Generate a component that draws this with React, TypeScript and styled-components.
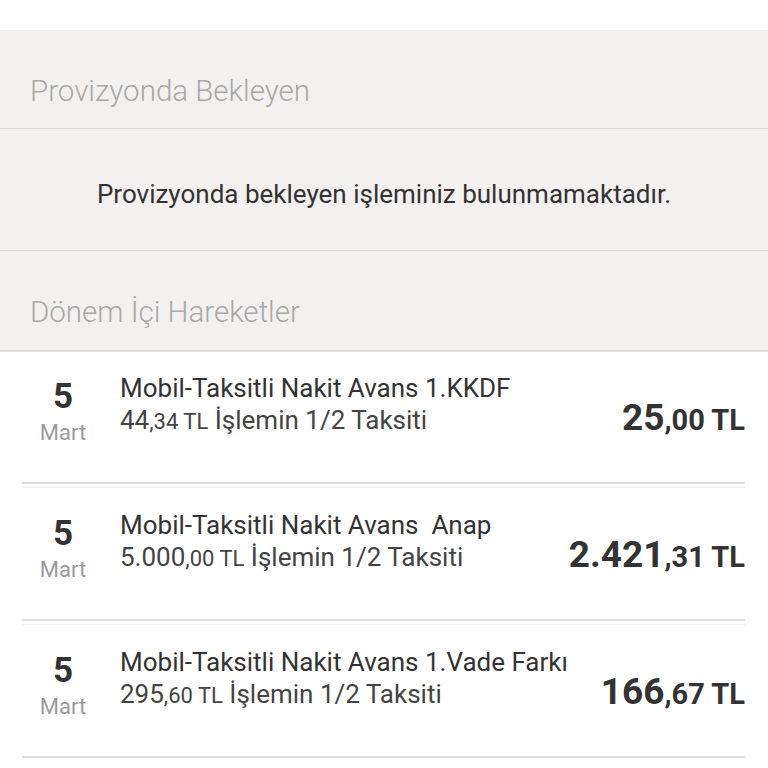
import styled, { createGlobalStyle } from 'styled-components';

const GlobalStyle = createGlobalStyle`
  html, body {
    margin: 0;
    padding: 0;
    background: #ffffff;
    font-family: Roboto, "Liberation Sans", sans-serif;
  }
`;

const Page = styled.div`
  width: 768px;
  padding-top: 30px;
  background: #ffffff;
`;

const GraySection = styled.div`
  background: #f2f1f0;
`;

const SectionHeader = styled.div<{ $h: number }>`
  height: ${(p) => p.$h}px;
  box-sizing: border-box;
  padding: 43px 30px 0;
  font-size: 29.5px;
  font-weight: 300;
  line-height: 36px;
  color: #a9a9a9;
  border-bottom: 1px solid #dcdbda;
`;

const EmptyMessage = styled.div`
  height: 122px;
  box-sizing: border-box;
  padding-top: 8px;
  display: flex;
  align-items: center;
  justify-content: center;
  font-size: 26px;
  color: #333333;
  border-bottom: 1px solid #dcdbda;
`;

const List = styled.div`
  background: #ffffff;
  border-top: 1px solid #e2e2e2;
`;

const Row = styled.div`
  margin: 0 23px 0 22px;
  height: 132px;
  box-sizing: border-box;
  padding-top: 20px;
  display: flex;
  align-items: flex-start;
  border-bottom: 2px solid #dddddd;
  & + & {
    border-top: 1px solid #efefef;
    margin-top: 3px;
    height: 134px;
    padding-top: 21px;
  }
`;

const DateCol = styled.div`
  width: 82px;
  margin-top: 4px;
  display: flex;
  flex-direction: column;
  align-items: center;
  flex-shrink: 0;
`;

const Day = styled.div`
  font-size: 35px;
  font-weight: 700;
  color: #333333;
  line-height: 42px;
`;

const Month = styled.div`
  font-size: 22px;
  color: #9b9b9b;
  line-height: 30px;
`;

const Info = styled.div`
  flex: 1;
  padding-left: 16px;
  color: #333333;
  font-size: 26px;
  line-height: 32px;
`;

const Sub = styled.div`
  color: #444444;
`;

const SmallTL = styled.span`
  font-size: 22px;
`;

const Amount = styled.div`
  align-self: center;
  margin-top: -20px;
  font-weight: 700;
  color: #333333;
  white-space: nowrap;
`;

const AmountMain = styled.span`
  font-size: 37px;
`;

const AmountRest = styled.span`
  font-size: 29px;
`;

type Tx = {
  title: string;
  base: string;
  baseCents: string;
  main: string;
  rest: string;
};

const txs: Tx[] = [
  { title: 'Mobil-Taksitli Nakit Avans 1.KKDF', base: '44', baseCents: ',34', main: '25', rest: ',00 TL' },
  { title: 'Mobil-Taksitli Nakit Avans\u00a0 Anap', base: '5.000', baseCents: ',00', main: '2.421', rest: ',31 TL' },
  { title: 'Mobil-Taksitli Nakit Avans 1.Vade Farkı', base: '295', baseCents: ',60', main: '166', rest: ',67 TL' },
];

export default function App() {
  return (
    <Page>
      <GlobalStyle />
      <GraySection>
        <SectionHeader $h={99}>Provizyonda Bekleyen</SectionHeader>
        <EmptyMessage>Provizyonda bekleyen işleminiz bulunmamaktadır.</EmptyMessage>
        <SectionHeader $h={100}>Dönem İçi Hareketler</SectionHeader>
      </GraySection>
      <List>
        {txs.map((t, i) => (
          <Row key={i}>
            <DateCol>
              <Day>5</Day>
              <Month>Mart</Month>
            </DateCol>
            <Info>
              <div>{t.title}</div>
              <Sub>
                {t.base}
                <SmallTL>{t.baseCents} TL</SmallTL> İşlemin 1/2 Taksiti
              </Sub>
            </Info>
            <Amount>
              <AmountMain>{t.main}</AmountMain>
              <AmountRest>{t.rest}</AmountRest>
            </Amount>
          </Row>
        ))}
      </List>
    </Page>
  );
}
